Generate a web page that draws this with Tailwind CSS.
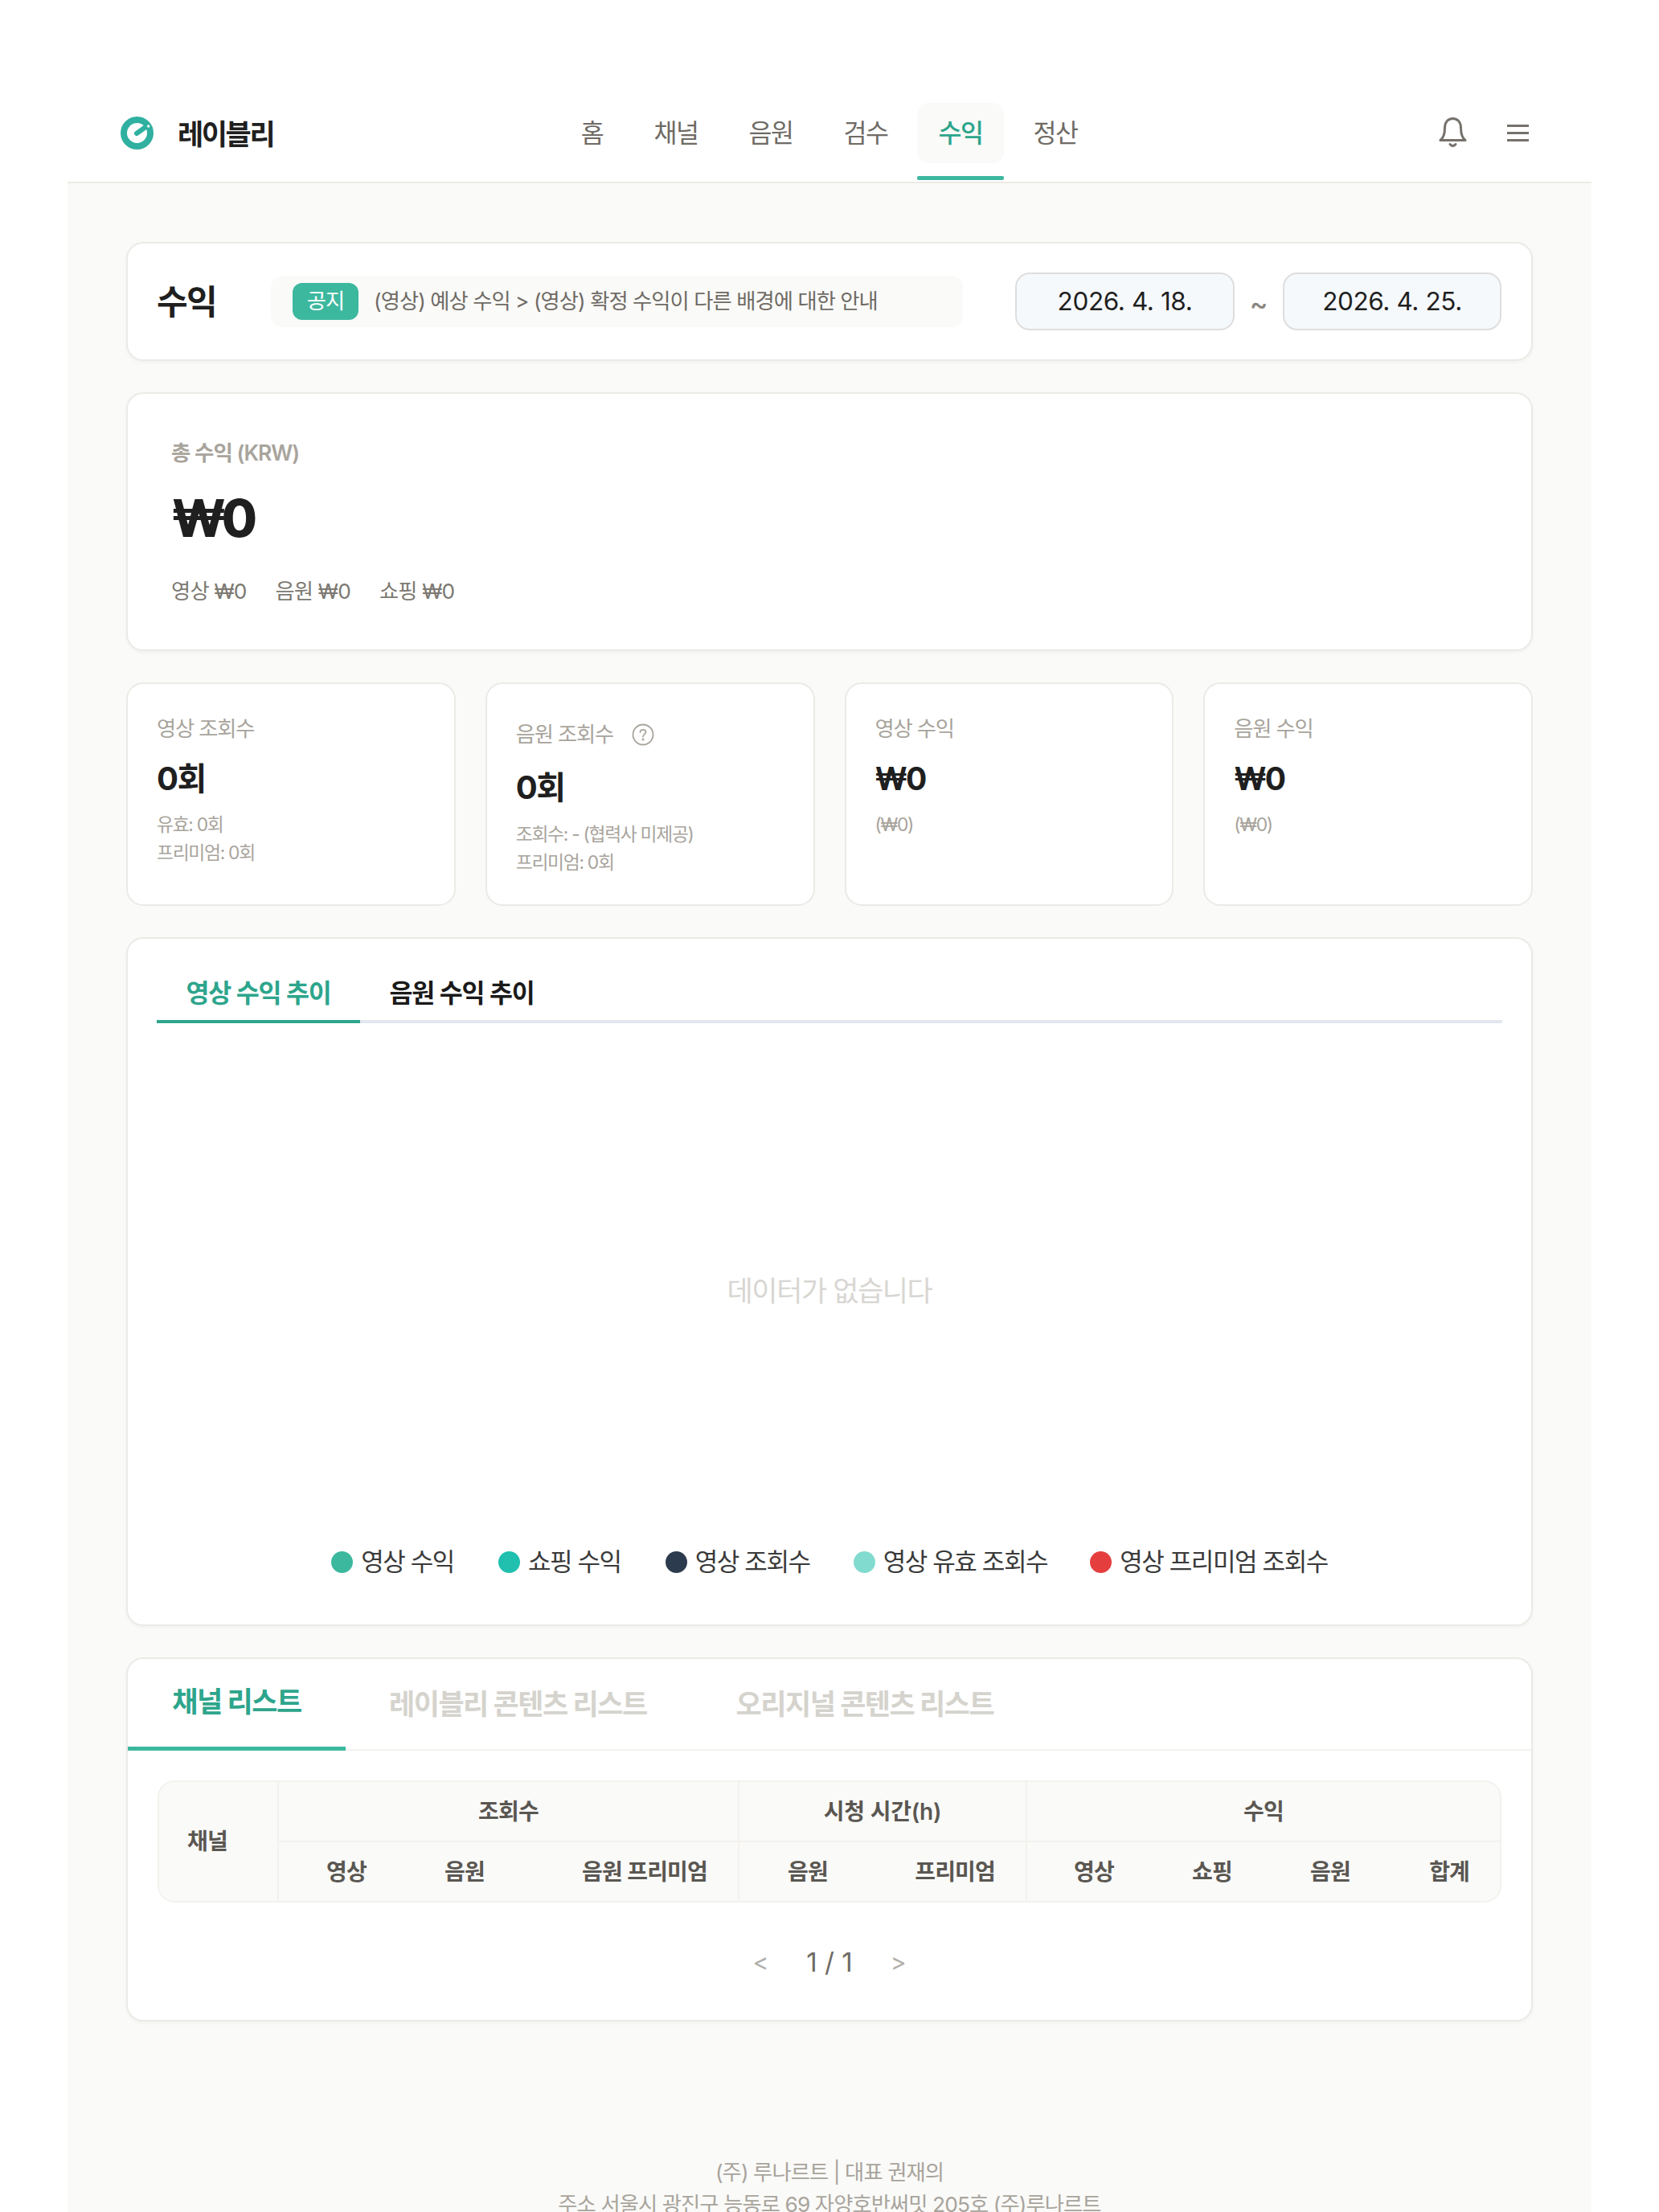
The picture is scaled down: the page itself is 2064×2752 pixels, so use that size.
<!DOCTYPE html>
<html lang="ko">
<head>
    <meta charset="UTF-8">
    <meta name="viewport" content="width=device-width, initial-scale=1.0">
    <title>레이블리 수익</title>
    <script src="https://cdn.jsdelivr.net/npm/@tailwindcss/browser@4"></script>
</head>
<body class="bg-white font-['Inter','Noto_Sans_CJK_KR',sans-serif] text-[#1f1f1f]">
<div class="h-[2752px] overflow-hidden">
    <div class="w-[1896px] ml-[84px]">
        <!-- Navigation -->
        <header class="h-[228px] pt-[128px] px-[66px] border-b-2 border-[#eceae5] grid grid-cols-[1fr_auto_1fr] bg-white">
            <div class="flex items-center gap-[30px] h-[75px]">
                <svg class="w-[41px] h-[41px]" viewBox="0 0 41 41" fill="none">
                    <circle cx="20.5" cy="20.5" r="16.5" stroke="#2fb0a0" stroke-width="8"/>
                    <path d="M20 21 L31.5 12.7" stroke="#2fb0a0" stroke-width="6" stroke-linecap="round"/>
                    <circle cx="34.7" cy="12" r="1.7" fill="#fff"/>
                </svg>
                <span class="text-[35px] font-bold tracking-[-2.4px] leading-none pt-[4px]">레이블리</span>
            </div>
            <nav class="flex gap-[10px] text-[31.5px] text-[#6f6b65] tracking-[-1.6px] -ml-[1px]">
                <a class="w-[81px]"><span class="h-[75px] flex items-center justify-center">홈</span></a>
                <a class="w-[108px]"><span class="h-[75px] flex items-center justify-center">채널</span></a>
                <a class="w-[108px]"><span class="h-[75px] flex items-center justify-center">음원</span></a>
                <a class="w-[108px]"><span class="h-[75px] flex items-center justify-center">검수</span></a>
                <a class="w-[108px] text-[#2da58c] font-medium">
                    <span class="h-[75px] flex items-center justify-center rounded-[14px] bg-[#fafaf8]">수익</span>
                    <div class="mt-[16px] h-[5px] rounded-[2px] bg-[#3cb89f]"></div>
                </a>
                <a class="w-[108px]"><span class="h-[75px] flex items-center justify-center">정산</span></a>
            </nav>
            <div class="flex items-center justify-end gap-[50px] h-[75px] pr-[12px]">
                <svg class="w-[35px] h-[39px]" viewBox="0 0 35 39" fill="none" stroke="#75716b" stroke-width="3" stroke-linejoin="round" stroke-linecap="round">
                    <path d="M2 28.5 H33 C28.5 25 27.5 20 27.5 13 C27.5 6 23.5 1.5 17.5 1.5 C11.5 1.5 7.5 6 7.5 13 C7.5 20 6.5 25 2 28.5 Z"/>
                    <path d="M14 33.5 Q17.5 37.5 21 33.5"/>
                </svg>
                <div class="w-[27px] flex flex-col gap-[6px]">
                    <div class="h-[3px] bg-[#75716b]"></div>
                    <div class="h-[3px] bg-[#75716b]"></div>
                    <div class="h-[3px] bg-[#75716b]"></div>
                </div>
            </div>
        </header>

        <!-- Main Content -->
        <main class="bg-[#fafaf8] pt-[73px] px-[73px] pb-[170px] flex flex-col gap-[39px]">
            <!-- Title bar -->
            <section class="h-[148px] bg-white border-2 border-[#eceae6] rounded-[21px] shadow-[0_2px_4px_rgba(0,0,0,0.04)] pl-[36px] pr-[37px] flex items-center">
                <h1 class="w-[142px] text-[42px] font-bold tracking-[-1.6px]">수익</h1>
                <div class="w-[861px] h-[64px] bg-[#fafaf8] rounded-[14px] pl-[27px] flex items-center">
                    <span class="w-[82px] h-[46px] rounded-[12px] bg-[#3cb89f] text-white text-[26.3px] flex items-center justify-center tracking-[-1px]">공지</span>
                    <span class="ml-[19px] text-[26.3px] text-[#6f6b65] tracking-[-0.95px]">(영상) 예상 수익 &gt; (영상) 확정 수익이 다른 배경에 대한 안내</span>
                </div>
                <div class="ml-auto flex items-center">
                    <div class="w-[273px] h-[72px] rounded-[18px] border-2 border-[#dedede] bg-[#f6f9fc] text-[31.5px] tracking-[-0.4px] flex items-center justify-center">2026. 4. 18.</div>
                    <span class="w-[60px] text-center text-[34px] font-medium text-[#8a8780] pt-[4px]">~</span>
                    <div class="w-[272px] h-[72px] rounded-[18px] border-2 border-[#dedede] bg-[#f6f9fc] text-[31.5px] tracking-[-0.4px] flex items-center justify-center">2026. 4. 25.</div>
                </div>
            </section>

            <!-- Total -->
            <section class="h-[322px] bg-white border-2 border-[#eceae6] rounded-[21px] shadow-[0_2px_4px_rgba(0,0,0,0.04)] pl-[54px] pt-[59px]">
                <div class="h-[30px] flex items-center text-[26.5px] font-semibold text-[#a8a49c] tracking-[-1px]">총 수익 (KRW)</div>
                <div class="mt-[38px] h-[56px] flex items-center text-[64px] font-extrabold tracking-[-6px] leading-none">₩0</div>
                <div class="mt-[43px] flex gap-[36px] text-[26.3px] text-[#7c7972] tracking-[-0.8px]">
                    <span>영상 ₩0</span><span>음원 ₩0</span><span>쇼핑 ₩0</span>
                </div>
            </section>

            <!-- Stats -->
            <section class="grid grid-cols-4 gap-[37px]">
                <div class="h-[278px] bg-white border-2 border-[#eceae6] rounded-[21px] pl-[36px] pt-[41px]">
                    <div class="h-[30px] flex items-center text-[26.3px] text-[#a8a49c] tracking-[-1.2px]">영상 조회수</div>
                    <div class="mt-[27px] h-[40px] flex items-center text-[40px] font-bold tracking-[-1.5px]">0회</div>
                    <div class="mt-[19px] text-[22.8px] leading-[35px] text-[#a8a49c] tracking-[-1.3px]">유효: 0회<br>프리미엄: 0회</div>
                </div>
                <div class="h-[278px] bg-white border-2 border-[#eceae6] rounded-[21px] pl-[36px] pt-[48px]">
                    <div class="h-[30px] flex items-center text-[26.3px] text-[#a8a49c] tracking-[-1.2px]">음원 조회수
                        <svg class="ml-[23px] w-[28px] h-[28px]" viewBox="0 0 28 28" fill="none" stroke="#a8a49c" stroke-width="1.8" stroke-linecap="round">
                            <circle cx="14" cy="14" r="12.5"/>
                            <path d="M10.5 11 C10.5 8.8 12 7.8 14 7.8 C16 7.8 17.5 9 17.5 10.8 C17.5 13.2 14 13.6 14 16.5"/>
                            <circle cx="14" cy="20" r="0.6" fill="#a8a49c"/>
                        </svg>
                    </div>
                    <div class="mt-[31px] h-[40px] flex items-center text-[40px] font-bold tracking-[-1.5px]">0회</div>
                    <div class="mt-[20px] text-[22.8px] leading-[35px] text-[#a8a49c] tracking-[-1.3px]">조회수: - (협력사 미제공)<br>프리미엄: 0회</div>
                </div>
                <div class="h-[278px] bg-white border-2 border-[#eceae6] rounded-[21px] pl-[36px] pt-[41px]">
                    <div class="h-[30px] flex items-center text-[26.3px] text-[#a8a49c] tracking-[-1.2px]">영상 수익</div>
                    <div class="mt-[27px] h-[40px] flex items-center text-[39px] font-bold tracking-[-2px]">₩0</div>
                    <div class="mt-[19px] text-[22.8px] leading-[35px] text-[#a8a49c] tracking-[-1.3px]">(₩0)</div>
                </div>
                <div class="h-[278px] bg-white border-2 border-[#eceae6] rounded-[21px] pl-[36px] pt-[41px]">
                    <div class="h-[30px] flex items-center text-[26.3px] text-[#a8a49c] tracking-[-1.2px]">음원 수익</div>
                    <div class="mt-[27px] h-[40px] flex items-center text-[39px] font-bold tracking-[-2px]">₩0</div>
                    <div class="mt-[19px] text-[22.8px] leading-[35px] text-[#a8a49c] tracking-[-1.3px]">(₩0)</div>
                </div>
            </section>

            <!-- Chart -->
            <section class="h-[857px] bg-white border-2 border-[#eceae6] rounded-[21px] shadow-[0_2px_4px_rgba(0,0,0,0.04)] px-[36px] pt-[40px] flex flex-col">
                <div class="flex h-[65px] border-b-[4px] border-[#e2e6ef] text-[31.5px] font-semibold tracking-[-1.2px]">
                    <div class="w-[253px] h-[65px] border-b-[4px] border-[#2da58c] text-[#2da58c] flex items-center justify-center pb-[6px]">영상 수익 추이</div>
                    <div class="w-[253px] h-[61px] text-[#1a1a1a] flex items-center justify-center pb-[6px]">음원 수익 추이</div>
                </div>
                <div class="h-[650px] pt-[16px] flex items-center justify-center text-[35px] text-[#d8d6d2] tracking-[-1.4px]">데이터가 없습니다</div>
                <div class="flex justify-center items-center h-[40px] text-[31px] text-[#3a3a3a] tracking-[-1.4px]">
                    <span class="w-[27px] h-[27px] rounded-full bg-[#3cb89f]"></span><span class="ml-[10px]">영상 수익</span>
                    <span class="ml-[55px] w-[27px] h-[27px] rounded-full bg-[#20bfae]"></span><span class="ml-[10px]">쇼핑 수익</span>
                    <span class="ml-[55px] w-[27px] h-[27px] rounded-full bg-[#2d3b4e]"></span><span class="ml-[10px]">영상 조회수</span>
                    <span class="ml-[54px] w-[27px] h-[27px] rounded-full bg-[#82dbcf]"></span><span class="ml-[10px]">영상 유효 조회수</span>
                    <span class="ml-[53px] w-[27px] h-[27px] rounded-full bg-[#e53e3e]"></span><span class="ml-[10px]">영상 프리미엄 조회수</span>
                </div>
            </section>

            <!-- Table -->
            <section class="h-[453px] bg-white border-2 border-[#eceae6] rounded-[21px] shadow-[0_2px_4px_rgba(0,0,0,0.04)]">
                <div class="flex h-[114px] border-b-2 border-[#f3f2ee] text-[35px] font-bold tracking-[-1.5px] text-[#d5d3cd]">
                    <div class="w-[271px] h-[114px] border-b-[5px] border-[#3cb89f] text-[#2da58c] flex items-center justify-center pb-[2px]">채널 리스트</div>
                    <div class="ml-[54px] h-[114px] flex items-center pb-[1px]">레이블리 콘텐츠 리스트</div>
                    <div class="ml-[111px] h-[114px] flex items-center pb-[1px]">오리지널 콘텐츠 리스트</div>
                </div>
                <div class="mx-[37px] mt-[37px] rounded-[21px] border-2 border-[#f3f2ee] bg-[#fafaf8] overflow-hidden">
                    <table class="w-full table-fixed border-collapse text-[28px] font-semibold text-[#5a5752] tracking-[-0.8px]">
                        <colgroup>
                            <col class="w-[148px]"><col class="w-[148px]"><col class="w-[147px]"><col class="w-[278px]">
                            <col class="w-[149px]"><col class="w-[209px]">
                            <col class="w-[147px]"><col class="w-[147px]"><col class="w-[147px]"><col class="w-[148px]">
                        </colgroup>
                        <thead>
                            <tr class="h-[74px]">
                                <th rowspan="2" class="text-left pl-[35px] font-semibold">채널</th>
                                <th colspan="3" class="font-semibold border-l-2 border-b-2 border-[#f3f2ee]">조회수</th>
                                <th colspan="2" class="font-semibold tracking-[-0.2px] border-l-2 border-b-2 border-[#f3f2ee]">시청 시간(h)</th>
                                <th colspan="4" class="font-semibold border-l-2 border-b-2 border-[#f3f2ee]">수익</th>
                            </tr>
                            <tr class="h-[74px]">
                                <th class="text-right pr-[38px] font-semibold border-l-2 border-[#f3f2ee]">영상</th>
                                <th class="text-right pr-[38px] font-semibold">음원</th>
                                <th class="text-right pr-[38px] font-semibold">음원 프리미엄</th>
                                <th class="text-right pr-[38px] font-semibold border-l-2 border-[#f3f2ee]">음원</th>
                                <th class="text-right pr-[38px] font-semibold">프리미엄</th>
                                <th class="text-right pr-[38px] font-semibold border-l-2 border-[#f3f2ee]">영상</th>
                                <th class="text-right pr-[38px] font-semibold">쇼핑</th>
                                <th class="text-right pr-[38px] font-semibold">음원</th>
                                <th class="text-right pr-[38px] font-semibold">합계</th>
                            </tr>
                        </thead>
                    </table>
                </div>
                <div class="mt-[50px] flex items-center justify-center">
                    <span class="text-[#b0aeaa] text-[30px]">&lt;</span>
                    <span class="mx-[47px] text-[33px] text-[#6f6b65]">1 / 1</span>
                    <span class="text-[#b0aeaa] text-[30px]">&gt;</span>
                </div>
            </section>

            <!-- Footer -->
            <footer class="mt-[129px] text-center text-[26.3px] leading-[40px] text-[#a8a49c] tracking-[-0.9px]">
                <p>(주) 루나르트 | 대표 권재의</p>
                <p>주소 서울시 광진구 능동로 69 자양호반써밋 205호 (주)루나르트</p>
            </footer>
        </main>
    </div>
</div>
</body>
</html>
